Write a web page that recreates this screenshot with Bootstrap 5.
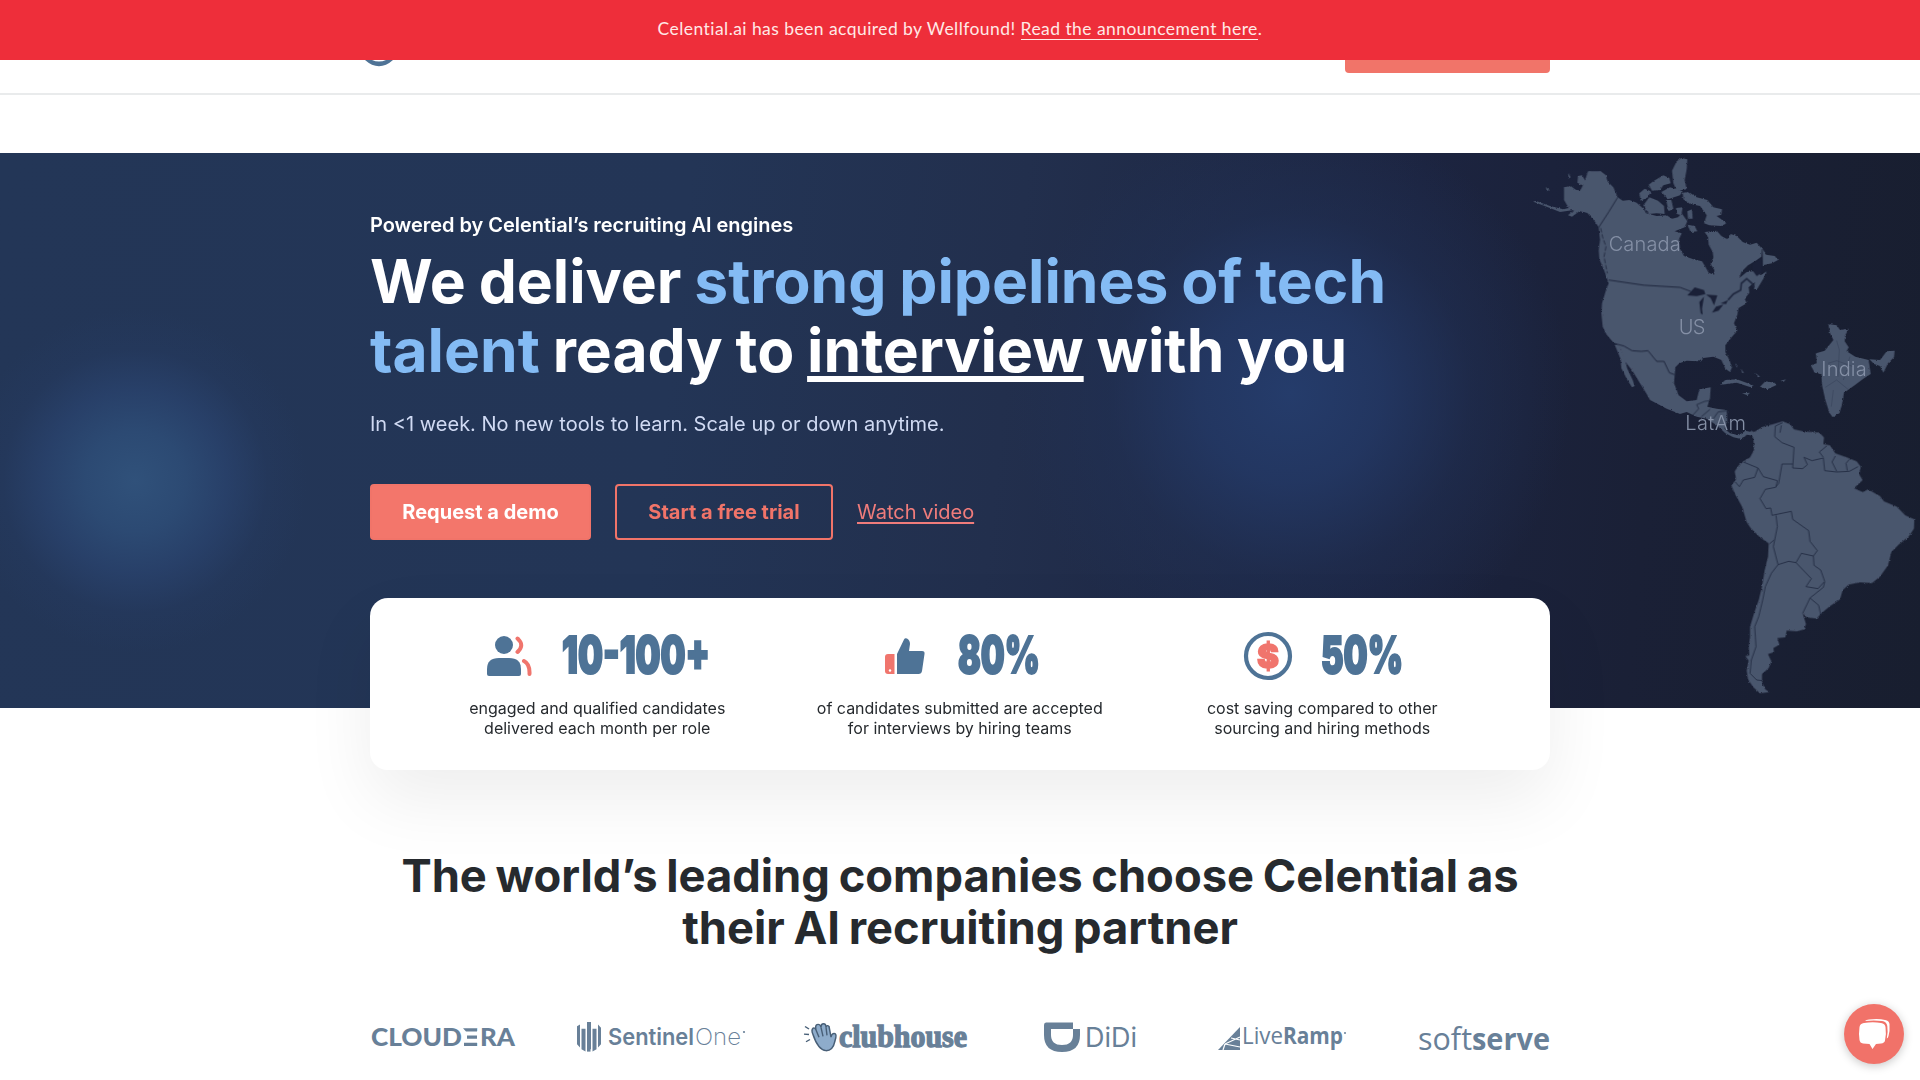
<!DOCTYPE html>
<html lang="en">
<head>
<meta charset="utf-8">
<meta name="viewport" content="width=device-width, initial-scale=1">
<title>Celential.ai</title>
<link rel="stylesheet" href="https://cdn.jsdelivr.net/npm/bootstrap@5.3.0/dist/css/bootstrap.min.css">
<style>
body{font-family:Inter,"Liberation Sans",sans-serif;color:#262a2e;height:1080px;overflow:hidden;background:#fff}
svg{display:block;overflow:visible}
.shell{width:1180px;margin:0 auto}
.announce{height:60px;background:#ee2e3a;color:#ffe9e6;font:400 17.5px/1 Lato,"Open Sans",sans-serif;letter-spacing:.44px;padding-bottom:2px}
.announce a{color:inherit;text-decoration:none;border-bottom:1px solid}
.topnav{height:35px;border-bottom:2px solid #e9ebec}
.topnav .cta{width:205px;height:13px;background:#f17469;border-radius:0 0 4px 4px}
.topnav svg{margin-left:-10px}
.hero{margin-top:58px;height:555px;color:#fff;background:
 radial-gradient(circle at 135px 328px,#30517a 0,rgba(45,76,118,.9) 50px,rgba(42,68,112,.7) 92px,rgba(38,60,100,.32) 132px,rgba(36,54,89,0) 172px),
 radial-gradient(circle at 1290px 240px,#253c6b 0,rgba(36,58,104,.8) 90px,rgba(33,50,88,.45) 180px,rgba(30,42,70,0) 280px),
 linear-gradient(96deg,#233657 0,#233556 35%,#222f4d 52%,#1c2440 72%,#1a2036 85%,#181e2f 100%)}
.map{right:0;top:0}
.hero .shell{padding-top:60px}
.kicker{font-size:20px;font-weight:600;line-height:24px;letter-spacing:-.03px}
.hero h1{font-size:60.5px;font-weight:700;line-height:69px;word-spacing:-1.5px;margin:10px 0 25px}
.hero h1 b{color:#84bbf4;font-weight:inherit}
.hero h1 u{text-decoration-thickness:6px;text-underline-offset:4px;text-decoration-skip-ink:none}
.pitch{font-size:20px;line-height:28px;color:#d0daf3;margin-bottom:46px}
.act{height:56px;border-radius:4px;font-size:20px;font-weight:700;border:2px solid #f17469;text-decoration:none}
.act-a{width:221px;background:#f3766b;color:#fff}
.act-b{width:218px;color:#f17469}
.watch{font-size:20px;color:#f07c7b;text-underline-offset:3px}
.stats{margin-top:-110px;height:172px;border-radius:18px;background:#fff;box-shadow:0 30px 70px rgba(0,0,0,.07);padding:34px 46px 0}
.stats .cell{width:362.5px}
.stats p{font-size:16px;line-height:20px;margin:18px 0 0;text-align:center}
.stats text{font:900 51px Inter,sans-serif;fill:#4e7396;stroke:#4e7396;stroke-width:2.2}
.lead-title{font-size:45.3px;line-height:52px;font-weight:700;word-spacing:-2px;text-align:center;margin:80px 0 0}
.logos{margin-top:63px;display:grid;grid-template-columns:207px 227px 240px 174px 200px 132px;fill:#688098}
.chat{right:16px;bottom:16px;width:60px;height:60px;border-radius:50%;background:#f17269;box-shadow:0 2px 10px rgba(0,0,0,.22)}
</style>
</head>
<body>
<div class="announce d-flex align-items-center justify-content-center"><span>Celential.ai has been acquired by Wellfound! <a href="#">Read the announcement here</a>.</span></div>
<nav class="topnav">
 <div class="shell d-flex justify-content-between">
  <svg width="40" height="7" viewBox="0 0 40 7"><path d="M5 0Q19 12.500 33 0H26Q19 3 12 0Z" fill="#4f7396"/></svg>
  <div class="cta"></div>
 </div>
</nav>

<section class="hero position-relative">
 <svg class="map position-absolute" width="420" height="555" viewBox="0 9 1260 1665">
  <defs><filter id="coast" x="-5%" y="-5%" width="110%" height="110%"><feTurbulence type="fractalNoise" baseFrequency=".12" numOctaves="3" seed="4"/><feDisplacementMap in="SourceGraphic" scale="7" xChannelSelector="R" yChannelSelector="G"/></filter></defs>
   <g fill="#4a566d" filter="url(#coast)">
    <path d="M192 112L206 174 240 184 262 188 300 230 353 142 320 90 302 64 264 64 252 100 240 122Z"/>
    <path d="M192 112L212 108 228 120 240 122 252 108 232 98 234 78 246 76 256 92 268 64 285 70 302 64 318 76 322 94 340 112 353 142 368 152 388 150 410 158 432 178 438 190 470 198 500 196 516 206 534 202 545 190 562 214 554 232 524 244 545 250 537 268 540 296 552 318 580 328 606 334 616 350 626 368 642 374 643 360 632 342 640 322 638 306 626 284 624 262 614 246 650 242 664 258 682 268 692 252 710 258 728 276 750 284 770 278 786 296 784 320 768 332 744 346 724 366 718 384 740 366 770 362 782 376 800 364 790 386 772 416 762 418 764 396 746 412 748 428 734 446 740 460 716 474 712 494 702 520 712 542 696 560 676 586 676 606 688 630 696 652 690 666 676 656 664 630 640 620 610 624 594 634 560 632 538 640 526 652 522 700 536 736 560 754 590 750 598 718 632 712 630 744 622 770 650 776 680 780 682 812 674 836 690 850 716 856 736 842 764 848 766 858 740 854 726 868 700 862 676 850 650 826 620 806 590 800 560 786 540 792 500 776 450 750 440 732 420 700 398 664 372 630 362 598 350 582 342 580 320 554 308 530 304 490 306 460 318 420 326 400 312 360 298 328 296 300 300 270 296 232 280 208 262 188 240 182 216 200 204 196 222 180 180 186 140 170 100 155 106 152 150 168 190 178 206 174 192 150Z"/>
    <path d="M344 584L356 584 372 620 382 656 398 690 404 708 396 712 382 690 364 655 362 628Z"/>
    <path d="M516 62L530 34 544 24 562 28 560 58 554 90 560 118 530 122 520 100Z M446 104L462 92 490 76 508 84 512 100 490 106 480 120 456 122Z M418 130L434 116 452 124 444 142 422 152Z M430 166L448 142 474 152 492 168 494 192 470 190 446 192Z M484 126L510 112 548 124 540 136 504 148Z M498 150L514 150 520 176 506 184Z M528 174L548 172 544 196 530 192Z M548 128L566 126 590 142 622 150 640 172 666 178 664 194 650 198 680 220 664 228 628 226 612 220 620 196 600 168 570 162 550 148Z M562 184L576 178 578 206 564 206Z M562 224L584 228 592 244 572 246Z M788 296L798 314 824 318 834 330 816 340 788 346Z M204 68L212 82 206 86Z M138 110L148 120 140 124Z"/>
    <path d="M660 704L676 690 710 688 760 706 752 712 710 698Z M780 710L796 694 824 698 828 706 802 718Z M726 730L750 728 742 736Z M842 692L858 688 850 696Z M706 640L712 646 710 654Z M724 656L732 670 726 668Z M766 668L780 680 774 682Z"/>
    <path transform="translate(0 750)" d="M750 90L762 96 790 80 820 72 848 64 870 72 882 88 910 94 958 98 972 112 970 132 990 136 1006 160 1040 172 1070 184 1082 200 1078 224 1088 240 1062 264 1088 276 1104 268 1140 288 1152 304 1190 320 1216 346 1243 358 1242 386 1226 410 1196 434 1174 456 1164 496 1140 530 1116 549 1080 547 1046 554 1028 570 1020 598 990 618 964 640 950 656 920 652 908 640 918 672 912 688 892 694 860 692 856 712 832 714 838 734 820 744 822 756 804 762 814 784 806 804 786 822 786 848 796 868 808 876 780 880 760 862 744 838 740 812 746 782 736 768 748 766 746 740 750 712 750 680 762 640 776 600 786 560 794 510 804 470 806 430 780 412 752 384 740 366 726 320 704 280 694 256 708 238 704 214 716 196 730 184 750 172 762 150 760 116Z"/>
    <path d="M985 522L1010 526 1020 540 1046 536 1036 556 1034 574 1046 592 1040 604 1066 620 1106 630 1112 672 1090 686 1064 706 1032 728 1026 764 1018 790 998 802 988 788 976 750 966 706 964 672 944 668 932 646 950 640 948 610 974 602 1000 570 990 550Z M1108 628L1140 630 1160 604 1184 602 1182 622 1164 640 1150 668 1140 648 1122 642Z"/>
   </g>
   <path fill="#1a2037" d="M562 436L584 412 612 420 616 432 590 438Z M602 490L598 456 612 440 606 476 608 494Z M618 434L652 436 642 466 632 444Z M636 488L648 470 670 464 656 482Z M662 460L684 450 678 462Z M756 340L786 322 788 366 770 378 758 362Z"/>
   <g fill="none" stroke="#20283f" stroke-width="3">
    <path d="M353 142L326 186 296 232M326 390Q430 410 540 412L572 424M342 580L372 588 396 602 424 604 444 602 470 634 492 634 508 668 524 674"/>
    <path d="M684 450L700 432 722 420 724 400 740 386 756 400 762 412" stroke-width="5"/>
    <path d="M302 234L308 262 318 290 312 320 322 370" stroke-width="2.500" stroke-dasharray="14 5"/>
    <path d="M578 796L596 776 590 764 614 754 628 752M604 800L630 778M640 806L654 786 680 782" stroke-width="2.4"/>
    <path transform="translate(0 750)" stroke-width="2.4" d="M848 68L826 78 824 110 846 128 882 142 878 204 908 206 922 194 912 172 936 182 970 174 974 212 1010 216 1048 214 1074 200M970 172L958 156 980 138M1010 214L996 186 1006 168M1042 212L1038 190 1048 178M878 192L846 192 836 250 826 262 796 268 780 296 798 326 812 324 816 346 874 334 878 358 926 392 930 424 952 452 940 468 904 460 888 488 866 484 834 494 820 440 832 380 828 346M730 186L774 204 790 230 832 242 828 262M774 204L764 232 730 240 718 260 706 246M808 432L822 420M834 494L814 520 796 560 788 600 776 650 764 680 768 740 754 780 750 820 770 840 788 842M888 488L934 536 918 560 954 566 974 544 962 510 942 496 940 468M974 546L970 562 930 594 908 640M930 594L956 616 962 644M844 76L840 98"/>
    <path stroke-width="1.4" stroke="#333e57" d="M1010 572L1018 600 1014 680M984 640L1010 632 1060 650M976 712L1010 690 1044 718M1000 720L994 770M1040 660L1030 690M1050 620L1040 650"/>
   </g>
  <g fill="#8590a6" font-family="Inter,sans-serif" font-size="60" font-weight="300">
   <text x="326" y="303" textLength="216">Canada</text><text x="536" y="552" textLength="80">US</text><text x="964" y="679" textLength="136">India</text><text x="556" y="840" textLength="182">LatAm</text>
  </g>
 </svg>
 <div class="shell position-relative">
  <div class="kicker">Powered by Celential’s recruiting AI engines</div>
  <h1>We deliver <b>strong pipelines of tech</b><br><b>talent</b> ready to <u>interview</u> with you</h1>
  <p class="pitch">In &lt;1 week. No new tools to learn. Scale up or down anytime.</p>
  <div class="d-flex align-items-center gap-4">
   <a class="act act-a d-flex align-items-center justify-content-center" href="#">Request a demo</a>
   <a class="act act-b d-flex align-items-center justify-content-center" href="#">Start a free trial</a>
   <a class="watch" href="#">Watch video</a>
  </div>
 </div>
</section>

<div class="shell stats position-relative d-flex">
 <div class="cell">
  <div class="d-flex justify-content-center" style="gap:31px">
   <svg width="44" height="48" viewBox="0 0 44 48"><g fill="#4e7396"><circle cx="17" cy="13" r="9"/><path d="M0 42V37Q0 26 12 26H22Q34 26 34 37V42Q34 44 32 44H2Q0 44 0 42Z"/></g><path d="M30.500 6.500Q38 13 30.500 20M37 29Q43 32 42.500 42" fill="none" stroke="#f0756d" stroke-width="4" stroke-linecap="round"/></svg>
   <svg width="146" height="48"><text x="0" y="41" textLength="148" lengthAdjust="spacingAndGlyphs">10-100+</text></svg>
  </div>
  <p>engaged and qualified candidates<br>delivered each month per role</p>
 </div>
 <div class="cell">
  <div class="d-flex justify-content-center ps-1" style="gap:33px">
   <svg width="40" height="48" viewBox="0 0 40 48"><path fill="#4e7396" d="M12 22L19 7.500Q20 5.500 22 6.500Q25 8 25 12L24 19H37Q40 19 39.500 22L37 39Q36.500 42 33.500 42H12Z"/><path fill="#f0756d" d="M3 22H9.500V42H3Q0 42 0 39V25Q0 22 3 22Z"/><circle cx="5" cy="38.500" r="1.200" fill="#fff"/></svg>
   <svg width="80" height="48"><text x="0" y="41" textLength="82" lengthAdjust="spacingAndGlyphs">80%</text></svg>
  </div>
  <p>of candidates submitted are accepted<br>for interviews by hiring teams</p>
 </div>
 <div class="cell">
  <div class="d-flex justify-content-center" style="gap:29px">
   <svg width="48" height="48" viewBox="0 0 48 48"><circle cx="24" cy="24" r="22" fill="none" stroke="#4e7396" stroke-width="4.200"/><text x="13" y="36" textLength="22" lengthAdjust="spacingAndGlyphs" style="font-size:33px;fill:#f0756d;stroke:#f0756d;stroke-width:1.400">$</text></svg>
   <svg width="80" height="48"><text x="0" y="41" textLength="82" lengthAdjust="spacingAndGlyphs">50%</text></svg>
  </div>
  <p>cost saving compared to other<br>sourcing and hiring methods</p>
 </div>
</div>

<h2 class="lead-title">The world’s leading companies choose Celential as<br>their AI recruiting partner</h2>

<div class="shell logos">
 <svg width="145" height="45"><g font-family="Lato,sans-serif" font-weight="900" font-size="25"><text x="1" y="29" textLength="91" lengthAdjust="spacingAndGlyphs">CLOUD</text><text x="92" y="29" textLength="16" lengthAdjust="spacingAndGlyphs">E</text><text x="110" y="29" textLength="35" lengthAdjust="spacingAndGlyphs">RA</text></g><path fill="#fff" d="M92 10H107V30H92Z"/><path d="M93 11.300h14v3.200H96zM97 18.500h10v3.200H97zM94 25.800h13v3.200H94z"/></svg>
 <svg width="170" height="45"><g transform="translate(0 1) scale(1 .82)"><path d="M0 10L3 8V36L0 32ZM4.500 13H8.500V41L4.500 38ZM10 5H14V38H10ZM15.500 13H19.500V38L15.500 41ZM21 8L24 12V32L21 36Z"/><path d="M10 10H13.500V41H10Z"/></g><text x="31" y="28" font-family="Inter,sans-serif" font-size="23" font-weight="600" textLength="86" lengthAdjust="spacingAndGlyphs">Sentinel</text><text x="118" y="28" font-family="Inter,sans-serif" font-size="23" font-weight="200" textLength="46" lengthAdjust="spacingAndGlyphs">One</text><circle cx="167" cy="15" r="1.100"/></svg>
 <svg width="164" height="45"><g transform="translate(0 -.5) scale(1 .9)"><path d="M9 20Q7 15 9 13Q11 12 12 15Q11 10 13 9Q16 8 17 12Q17 8 19.500 8Q22 8 22 12Q23 9 25 11L27 23Q28 18 31 19Q33 20 31 27Q29 38 22 38Q14 37 9 20Z" fill="#8eaccb" stroke="#485f77" stroke-width="1.500"/><path d="M12 15L15 23M17 12L19 22M22 12L23 21M1 11L5 14M0 19.500L5 20M2 28L6 25.500" fill="none" stroke="#485f77" stroke-width="1.400"/></g><text x="35" y="30" font-family="Liberation Serif,serif" font-weight="700" font-size="31" stroke="#688098" stroke-width="1.300" textLength="128" lengthAdjust="spacingAndGlyphs">clubhouse</text></svg>
 <svg width="94" height="45"><path fill-rule="evenodd" d="M0 8Q0 5.500 2 5.500H29V12H36V18Q36 35 18 35Q0 35 0 18ZM7 12V18Q7 28 18 28Q29 28 29 18V12Z"/><text x="41" y="30" font-family="Inter,sans-serif" font-size="27" font-weight="400" textLength="52" lengthAdjust="spacingAndGlyphs">DiDi</text></svg>
 <svg width="130" height="45"><path d="M0 33L22 10V33Z"/><path d="M7 27L22 20M7 27L22 30M7 27L5 33M13 21L22 23" stroke="#fff" stroke-width="1.200" fill="none"/><g font-family="Open Sans,sans-serif" font-size="24"><text x="24" y="27" font-weight="400" textLength="41" lengthAdjust="spacingAndGlyphs">Live</text><text x="65" y="27" font-weight="700" textLength="60" lengthAdjust="spacingAndGlyphs">Ramp</text></g><circle cx="127" cy="16" r="1"/></svg>
 <svg width="132" height="45"><g font-family="Open Sans,sans-serif" font-size="31"><text x="0" y="32.500" font-weight="400" textLength="54" lengthAdjust="spacingAndGlyphs">soft</text><text x="54" y="32.500" font-weight="700" textLength="78" lengthAdjust="spacingAndGlyphs">serve</text></g></svg>
</div>

<a class="chat position-fixed" href="#" aria-label="Chat"><svg width="60" height="60" viewBox="0 0 60 60" fill="#fff"><path d="M20 19Q29 17.500 37 19Q41 19.500 41.500 23Q42.500 30 41 36.500Q40.500 39 37 39.500L32 40 28.500 45 25.500 40 19 39.500Q16 39 15.500 36Q14.500 30 15.500 23Q16 19.500 20 19Z"/><path d="M21 17Q22 15.500 25 15.500Q35 14.500 41 16Q45 16.500 45.500 20Q46 27 44.500 32Q44 34 42.800 34.500Q44.200 28 43.300 22Q42.500 17.500 38 17Q30 15.800 21 17Z"/></svg></a>
</body>
</html>
